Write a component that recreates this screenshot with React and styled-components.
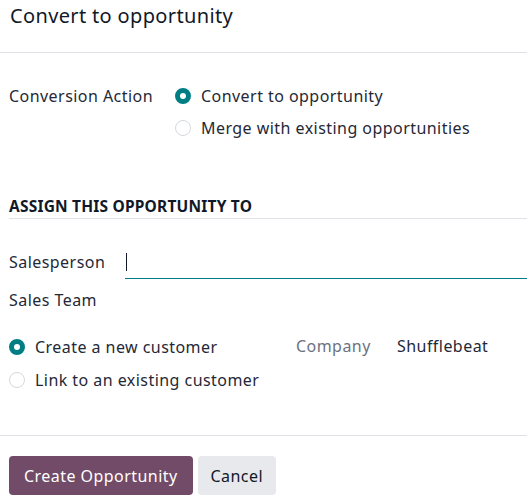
import React from "react";
import styled, { createGlobalStyle } from "styled-components";

const Global = createGlobalStyle`
  html, body { margin: 0; padding: 0; background: #fff; }
  body { font-family: "Noto Sans", "Open Sans", sans-serif; color: #1f2937; }
`;

const Dialog = styled.div`
  width: 527px;
  height: 501px;
  display: flex;
  flex-direction: column;
  overflow: hidden;
`;

const Header = styled.div`
  height: 51px;
  border-bottom: 1px solid #dee2e6;
  padding: 1px 10px 0;
  box-sizing: content-box;
`;

const Title = styled.h4`
  margin: 0;
  font-size: 20px;
  font-weight: 400;
  letter-spacing: 0.35px;
  line-height: 30px;
  color: #111827;
`;

const Body = styled.div`
  padding: 27px 0 0 9px;
  height: 383px;
  border-bottom: 1px solid #dee2e6;
  box-sizing: border-box;
`;

const FieldRow = styled.div`
  display: grid;
  grid-template-columns: ${(p) => p.$label}px 1fr;
  align-items: start;
  margin-bottom: ${(p) => p.$mb || 0}px;
`;

const Text = `
  font-size: 16px;
  letter-spacing: 0.45px;
  font-weight: 400;
`;

const Label = styled.div`
  ${Text}
  line-height: 32px;
  color: #1f2937;
`;

const RadioList = styled.div`
  display: flex;
  flex-direction: column;
`;

const RadioItem = styled.label`
  ${Text}
  display: flex;
  align-items: center;
  gap: 10px;
  height: ${(p) => p.$h || 32}px;
  color: #1f2937;
`;

const RadioDot = styled.span`
  width: 16px;
  height: 16px;
  border-radius: 50%;
  box-sizing: border-box;
  flex: none;
  background: #fff;
  border: ${(p) => (p.$checked ? "5px solid #017e84" : "1px solid #d5d8dc")};
`;

const SectionTitle = styled.div`
  margin-top: 52px;
  font-size: 15.5px;
  font-weight: 700;
  letter-spacing: 0.2px;
  color: #111827;
  line-height: 20px;
  padding-bottom: 2px;
  border-bottom: 1px solid #dee2e6;
  margin-bottom: 27px;
`;

const InputWrap = styled.div`
  height: 27px;
  border-bottom: 1px solid #017e84;
  margin-top: 5px;
  position: relative;
`;

const Caret = styled.span`
  position: absolute;
  left: 1px;
  top: 2px;
  width: 1px;
  height: 18px;
  background: #111827;
`;

const CustomerRow = styled.div`
  margin-top: 14px;
  display: grid;
  grid-template-columns: 287px 101px 1fr;
`;

const Muted = styled.div`
  ${Text}
  line-height: 33px;
  color: #6b7280;
`;

const Value = styled.div`
  ${Text}
  line-height: 33px;
  color: #1f2937;
`;

const Footer = styled.div`
  display: flex;
  gap: 5px;
  padding: 20px 9px 0;
`;

const Button = styled.button`
  height: 39px;
  border: none;
  border-radius: 4px;
  padding: 0 ${(p) => (p.$primary ? 15 : 13)}px;
  font-family: inherit;
  ${Text}
  background: ${(p) => (p.$primary ? "#714b67" : "#e7e9ed")};
  color: ${(p) => (p.$primary ? "#fff" : "#111827")};
`;

export default function App() {
  return (
    <Dialog>
      <Global />
      <Header>
        <Title>Convert to opportunity</Title>
      </Header>
      <Body>
        <FieldRow $label={166}>
          <Label>Conversion Action</Label>
          <RadioList>
            <RadioItem>
              <RadioDot $checked />
              Convert to opportunity
            </RadioItem>
            <RadioItem>
              <RadioDot />
              Merge with existing opportunities
            </RadioItem>
          </RadioList>
        </FieldRow>
        <SectionTitle>ASSIGN THIS OPPORTUNITY TO</SectionTitle>
        <FieldRow $label={116} $mb={5}>
          <Label>Salesperson</Label>
          <InputWrap>
            <Caret />
          </InputWrap>
        </FieldRow>
        <FieldRow $label={116}>
          <Label>Sales Team</Label>
          <div />
        </FieldRow>
        <CustomerRow>
          <RadioList>
            <RadioItem $h={33}>
              <RadioDot $checked />
              Create a new customer
            </RadioItem>
            <RadioItem $h={33}>
              <RadioDot />
              Link to an existing customer
            </RadioItem>
          </RadioList>
          <Muted>Company</Muted>
          <Value>Shufflebeat</Value>
        </CustomerRow>
      </Body>
      <Footer>
        <Button $primary>Create Opportunity</Button>
        <Button>Cancel</Button>
      </Footer>
    </Dialog>
  );
}
